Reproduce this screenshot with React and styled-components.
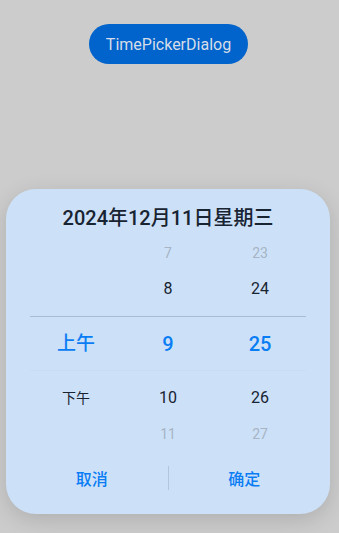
import React from "react";
import styled, { createGlobalStyle } from "styled-components";

const Global = createGlobalStyle`
  html, body { margin: 0; padding: 0; background: #cccccc; }
  body { font-family: Roboto, "Noto Sans CJK SC", "Noto Sans", sans-serif; }
  * { box-sizing: border-box; }
`;

const Page = styled.div`
  height: 100vh;
  display: flex;
  flex-direction: column;
  align-items: flex-start;
  padding-top: 24px;
  overflow: hidden;
`;

const TriggerButton = styled.button`
  align-self: flex-start;
  margin-left: 89px;
  width: 159px;
  height: 40px;
  border: none;
  border-radius: 20px;
  background: #0064cc;
  color: #d6dde9;
  font-family: Roboto, sans-serif;
  font-size: 16px;
  font-weight: 400;
  padding: 0;
`;

const Dialog = styled.div`
  margin-top: auto;
  margin-bottom: 19px;
  margin-left: 6px;
  width: 324px;
  background: #cce1f8;
  border-radius: 30px;
  box-shadow: 0 6px 22px rgba(0, 0, 0, 0.14);
  padding: 16px 0 16px;
  display: flex;
  flex-direction: column;
`;

const Title = styled.div`
  height: 26px;
  line-height: 26px;
  text-align: center;
  font-size: 20px;
  font-weight: 500;
  color: #182431;
`;

const Picker = styled.div`
  margin: 4px 24px 0;
  display: flex;
  flex-direction: column;
`;

const Row = styled.div`
  display: grid;
  grid-template-columns: repeat(3, 1fr);
  align-items: center;
  height: ${(p) => p.$height}px;
  ${(p) =>
    p.$selected &&
    `
    margin: 9px 0;
    border-top: 1px solid #a8bcd4;
    border-bottom: 1px solid #c8dcf2;
  `}
`;

const tones = {
  faded: { color: "#a7b4c4", size: 14, weight: 400 },
  normal: { color: "#182431", size: 16, weight: 400 },
  selected: { color: "#0a7df5", size: 20, weight: 500 },
};

const Cell = styled.div`
  text-align: center;
  color: ${(p) => tones[p.$tone].color};
  font-size: ${(p) => p.$size || tones[p.$tone].size}px;
  font-weight: ${(p) => tones[p.$tone].weight};
  line-height: 1;
`;

const Footer = styled.div`
  margin-top: 6px;
  padding: 0 10px;
  height: 40px;
  display: flex;
  align-items: center;
`;

const FooterButton = styled.button`
  flex: 1;
  height: 40px;
  border: none;
  background: transparent;
  color: #0a7df5;
  font-family: Roboto, "Noto Sans CJK SC", sans-serif;
  font-size: 16px;
  font-weight: 500;
  padding: 0;
`;

const Divider = styled.div`
  width: 1px;
  height: 24px;
  background: #b3c6dc;
`;

const rows = [
  { cells: ["", "7", "23"], tone: "faded", height: 36 },
  { cells: ["", "8", "24"], tone: "normal", height: 36 },
  { cells: ["上午", "9", "25"], tone: "selected", height: 55, selected: true, ampmSize: 19 },
  { cells: ["下午", "10", "26"], tone: "normal", height: 36, ampmSize: 14 },
  { cells: ["", "11", "27"], tone: "faded", height: 36 },
];

export default function App() {
  return (
    <>
      <Global />
      <Page>
        <TriggerButton>TimePickerDialog</TriggerButton>
        <Dialog>
          <Title>2024年12月11日星期三</Title>
          <Picker>
            {rows.map((r, i) => (
              <Row key={i} $height={r.height} $selected={r.selected}>
                {r.cells.map((c, j) => (
                  <Cell key={j} $tone={r.tone} $size={j === 0 ? r.ampmSize : undefined}>
                    {c}
                  </Cell>
                ))}
              </Row>
            ))}
          </Picker>
          <Footer>
            <FooterButton>取消</FooterButton>
            <Divider />
            <FooterButton>确定</FooterButton>
          </Footer>
        </Dialog>
      </Page>
    </>
  );
}
